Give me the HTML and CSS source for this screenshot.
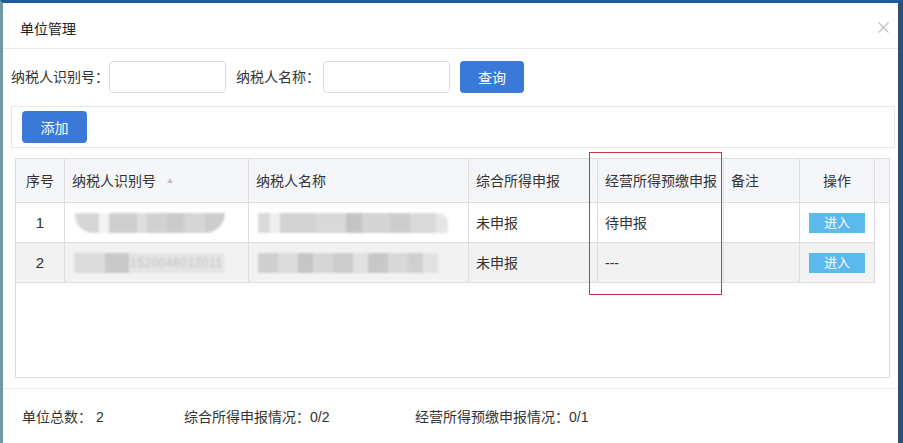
FILE: index.html
```html
<!DOCTYPE html>
<html lang="zh-CN">
<head>
    <meta charset="UTF-8">
    <title>单位管理</title>
    <link rel="stylesheet" href="styles.css">
</head>
<body>
    <div class="dialog">
        <div class="dialog-header">
            <span class="dialog-title">单位管理</span>
            <span class="dialog-close">
                <svg width="11" height="11" viewBox="0 0 11 11"><path d="M0.5 0.5L10.5 10.5M10.5 0.5L0.5 10.5" stroke="#c4c4c4" stroke-width="1.3"/></svg>
            </span>
        </div>
        <div class="search-bar">
            <span class="search-label">纳税人识别号：</span>
            <input class="input input-id" type="text">
            <span class="search-label second">纳税人名称：</span>
            <input class="input input-name" type="text">
            <button class="btn btn-query">查询</button>
        </div>
        <div class="toolbar">
            <button class="btn btn-add">添加</button>
        </div>
        <div class="grid-box">
            <div class="grid-row grid-head">
                <div class="cell center">序号</div>
                <div class="cell">纳税人识别号<span class="sort-arrow"></span></div>
                <div class="cell">纳税人名称</div>
                <div class="cell">综合所得申报</div>
                <div class="cell">经营所得预缴申报</div>
                <div class="cell">备注</div>
                <div class="cell center">操作</div>
                <div class="cell gutter"></div>
            </div>
            <div class="grid-row">
                <div class="cell center num">1</div>
                <div class="cell"><span class="blur blur-id1"></span></div>
                <div class="cell"><span class="blur blur-name1"></span></div>
                <div class="cell">未申报</div>
                <div class="cell">待申报</div>
                <div class="cell"></div>
                <div class="cell center"><span class="btn-enter">进入</span></div>
            </div>
            <div class="grid-row striped">
                <div class="cell center num">2</div>
                <div class="cell"><span class="blur blur-id2"><span class="blur-text">1520046012011</span></span></div>
                <div class="cell"><span class="blur blur-name2"></span></div>
                <div class="cell">未申报</div>
                <div class="cell">---</div>
                <div class="cell"></div>
                <div class="cell center"><span class="btn-enter">进入</span></div>
            </div>
        </div>
        <div class="dialog-footer">
            <span class="stat stat-total">单位总数： 2</span>
            <span class="stat stat-general">综合所得申报情况：0/2</span>
            <span class="stat">经营所得预缴申报情况：0/1</span>
        </div>
        <div class="mark"></div>
    </div>
</body>
</html>
```

FILE: styles.css
```css
body {
    margin: 0;
    font-family: "Liberation Sans", "Noto Sans CJK SC", sans-serif;
    font-size: 14px;
    color: #333;
    background: #fff;
}
.dialog {
    position: relative;
    width: 903px;
    height: 443px;
    box-sizing: border-box;
    border-top: 3px solid #1d5d9c;
    border-left: 3px solid #6e98a6;
    border-right: 5px solid #2d4f72;
    background: #fff;
    overflow: hidden;
}
.dialog-header {
    display: flex;
    justify-content: space-between;
    align-items: center;
    height: 45px;
    padding: 0 9px 0 17px;
    border-bottom: 1px solid #e8e8e8;
}
.dialog-title {
    font-size: 14px;
    color: #222;
    line-height: 20px;
    margin-top: 6px;
}
.dialog-close {
    display: flex;
    margin-top: 3px;
}
.search-bar {
    display: flex;
    align-items: center;
    height: 32px;
    padding: 12px 0 13px 8px;
}
.search-label {
    line-height: 20px;
    color: #333;
}
.search-label.second {
    margin-left: 10px;
}
.input {
    box-sizing: border-box;
    height: 32px;
    border: 1px solid #dcdcdc;
    border-radius: 4px;
    outline: none;
    padding: 0 6px;
    margin: 0;
}
.input-id {
    width: 117px;
}
.input-name {
    width: 127px;
    margin-left: 3px;
}
.btn {
    box-sizing: border-box;
    height: 32px;
    border: none;
    border-radius: 4px;
    background: #3a79d8;
    color: #fff;
    font-family: "Liberation Sans", "Noto Sans CJK SC", sans-serif;
    font-size: 14px;
    padding: 0;
    cursor: pointer;
}
.btn-query {
    width: 64px;
    margin-left: 10px;
}
.btn-add {
    width: 65px;
}
.toolbar {
    margin: 0 3px 0 8px;
    padding: 4px 10px;
    border: 1px solid #e6e6e6;
    display: flex;
}
.grid-box {
    box-sizing: border-box;
    height: 220px;
    margin: 10px 8px 0 12px;
    border: 1px solid #dddddd;
    background: #fff;
}
.grid-row {
    display: grid;
    grid-template-columns: 49px 184px 220px 129px 126px 76px 75px;
    height: 40px;
}
.grid-head {
    grid-template-columns: 49px 184px 220px 129px 126px 76px 75px 15px;
    height: 44px;
    background: #f4f6f9;
}
.cell {
    box-sizing: border-box;
    display: flex;
    align-items: center;
    padding: 0 7px;
    border-right: 1px solid #dedede;
    border-bottom: 1px solid #dedede;
    line-height: 20px;
    white-space: nowrap;
    overflow: hidden;
}
.cell.center {
    justify-content: center;
    padding: 0;
}
.cell.num {
    font-size: 15px;
}
.cell.gutter {
    border-right: none;
}
.striped .cell {
    background: #f2f2f2;
}
.sort-arrow {
    width: 0;
    height: 0;
    margin-left: 11px;
    border-left: 3px solid transparent;
    border-right: 3px solid transparent;
    border-bottom: 5px solid #c2c2c2;
}
.blur {
    display: inline-block;
    position: relative;
    height: 20px;
    margin-left: 2px;
    filter: blur(1.2px);
}
.blur-id1 {
    width: 151px;
    background: linear-gradient(90deg, #e4e4e4 0 3px, #d6d6d6 3px 25px, #f3f3f3 25px 35px, #cfcfcf 35px 63px, #dedede 63px 73px, #d1d1d1 73px 93px, #cbcbcb 93px 110px, #d6d6d6 110px 131px, #cdcdcd 131px 151px);
    border-radius: 0 0 30px 30px;
}
.blur-name1 {
    width: 190px;
    background: linear-gradient(90deg, #dadada 0 12px, #eeeeee 12px 22px, #d3d3d3 22px 58px, #d9d9d9 58px 88px, #c4c4c4 88px 104px, #d4d4d4 104px 132px, #cccccc 132px 152px, #dadada 152px 178px, #e6e6e6 178px 190px);
    border-radius: 0 10px 4px 0;
}
.blur-id2 {
    width: 150px;
    background: linear-gradient(90deg, #dcdcdc 0 31px, #c9c9c9 31px 55px, #e4e4e4 55px 150px);
}
.blur-text {
    position: absolute;
    left: 56px;
    top: 0;
    font-size: 12px;
    line-height: 20px;
    color: #c4c4c4;
    letter-spacing: 0.5px;
    filter: blur(0.6px);
}
.blur-name2 {
    width: 180px;
    background: linear-gradient(90deg, #cfcfcf 0 20px, #dcdcdc 20px 40px, #c6c6c6 40px 55px, #d6d6d6 55px 75px, #cdcdcd 75px 95px, #e0e0e0 95px 110px, #c8c8c8 110px 130px, #d8d8d8 130px 150px, #cfcfcf 150px 165px, #e2e2e2 165px 180px);
}
.btn-enter {
    display: inline-flex;
    align-items: center;
    justify-content: center;
    width: 56px;
    height: 20px;
    background: #5cb9ee;
    color: #fff;
    font-size: 13px;
}
.dialog-footer {
    display: flex;
    margin-top: 10px;
    padding: 18px 0 0 19px;
    border-top: 1px solid #e8e8e8;
    line-height: 20px;
}
.stat-total {
    width: 162px;
}
.stat-general {
    width: 231px;
}
.mark {
    position: absolute;
    left: 586px;
    top: 149px;
    width: 131px;
    height: 141px;
    border: 1px solid #c53a3a;
}
```
